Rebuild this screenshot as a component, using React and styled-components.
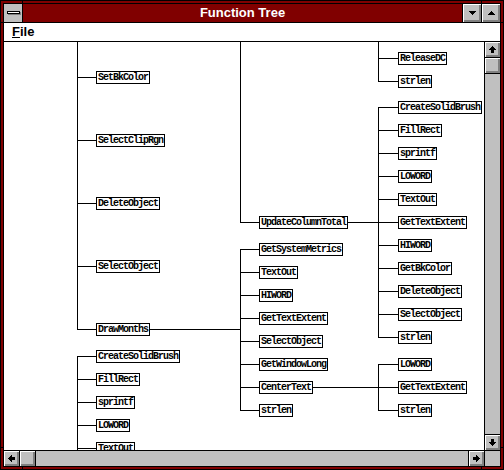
import React from 'react'
import styled, { createGlobalStyle } from 'styled-components'

// client area origin in page pixels
const OX = 4
const OY = 42
const BOTTOM = 450

const COLS = [
  { line: 77, box: 96 },
  { line: 240, box: 259 },
  { line: 378, box: 398 },
]

const groups = [
  { col: 0, open: 'top', items: [['SetBkColor', 77], ['SelectClipRgn', 140], ['DeleteObject', 203], ['SelectObject', 266], ['DrawMonths', 329]] },
  { col: 0, open: 'bottom', items: [['CreateSolidBrush', 356], ['FillRect', 379], ['sprintf', 402], ['LOWORD', 425], ['TextOut', 448]] },
  { col: 1, open: 'top', items: [['UpdateColumnTotal', 222]] },
  {
    col: 1, parent: [0, 329],
    items: [['GetSystemMetrics', 249], ['TextOut', 272], ['HIWORD', 295], ['GetTextExtent', 318], ['SelectObject', 341], ['GetWindowLong', 364], ['CenterText', 387], ['strlen', 410]],
  },
  { col: 2, open: 'top', items: [['ReleaseDC', 58], ['strlen', 81]] },
  {
    col: 2, parent: [1, 222],
    items: [['CreateSolidBrush', 107], ['FillRect', 130], ['sprintf', 153], ['LOWORD', 176], ['TextOut', 199], ['GetTextExtent', 222], ['HIWORD', 245], ['GetBkColor', 268], ['DeleteObject', 291], ['SelectObject', 314], ['strlen', 337]],
  },
  { col: 2, parent: [1, 387], items: [['LOWORD', 364], ['GetTextExtent', 387], ['strlen', 410]] },
]

const GlobalStyle = createGlobalStyle`
  html, body { margin: 0; padding: 0; background: #fff; }
  body { font-family: "Liberation Sans", Arial, sans-serif; }
`

const Window = styled.div`
  position: relative;
  width: 504px;
  height: 470px;
  box-sizing: border-box;
  background: #800000;
  border: 1px solid #000;
  padding: 2px;
  display: flex;
`

const Notch = styled.div`
  position: absolute;
  background: #000;
  ${p => (p.$v ? 'width: 1px; height: 4px;' : 'width: 4px; height: 1px;')}
`

const Frame = styled.div`
  flex: 1;
  min-width: 0;
  border: 1px solid #000;
  display: flex;
  flex-direction: column;
`

const TitleBar = styled.div`
  height: 18px;
  border-bottom: 1px solid #000;
  background: #800000;
  display: flex;
`

const SysBox = styled.div`
  width: 19px;
  box-sizing: border-box;
  border-right: 1px solid #000;
  background: #c0c0c0;
  display: flex;
  align-items: center;
  justify-content: center;
`

const SysBar = styled.div`
  width: 11px;
  height: 1px;
  background: #fff;
  border: 1px solid #000;
  box-shadow: 1px 1px 0 #808080;
  margin-top: -1px;
`

const Title = styled.div`
  flex: 1;
  text-align: center;
  color: #fff;
  font: bold 13px/18px "Liberation Sans", Arial, sans-serif;
`

const TitleBtn = styled.div`
  width: 19px;
  box-sizing: border-box;
  border-left: 1px solid #000;
  background: #c0c0c0;
  box-shadow: inset 1px 1px #fff, inset -1px -1px #808080, inset -2px -2px #808080;
  display: flex;
  align-items: center;
  justify-content: center;
`

const MenuBar = styled.div`
  height: 18px;
  border-bottom: 1px solid #000;
  background: #fff;
  padding-left: 8px;
  font: bold 13px/18px "Liberation Sans", Arial, sans-serif;
  color: #000;
`

const Body = styled.div`
  display: grid;
  grid-template-columns: 480px 16px;
  grid-template-rows: 408px 16px;
`

const Client = styled.div`
  position: relative;
  overflow: hidden;
  background: #fff;
`

const Wires = styled.svg`
  position: absolute;
  left: 0;
  top: 0;
`

const Node = styled.div.attrs(p => ({ style: { left: p.$x, top: p.$y } }))`
  position: absolute;
  height: 13px;
  box-sizing: border-box;
  border: 1px solid #000;
  background: #fff;
  padding: 0 1px;
  color: #000;
  font: bold 10px/11px "Liberation Mono", "Courier New", monospace;
  letter-spacing: -1px;
  white-space: nowrap;
`

const VScroll = styled.div`
  border-left: 1px solid #000;
  background: #c0c0c0;
  display: flex;
  flex-direction: column;
`

const HScroll = styled.div`
  border-top: 1px solid #000;
  background: #c0c0c0;
  display: flex;
`

const Corner = styled.div`
  border-top: 1px solid #000;
  border-left: 1px solid #000;
  background: #c0c0c0;
`

const Track = styled.div`
  flex: 1;
`

const Knob = styled.div`
  flex: none;
  width: ${p => (p.$h ? '16px' : 'auto')};
  height: ${p => (p.$h ? 'auto' : '16px')};
  box-sizing: border-box;
  background: #c0c0c0;
  box-shadow: inset 1px 1px #fff, inset -1px -1px #808080, inset -2px -2px #808080;
  ${p => p.$edge && `border-${p.$edge}: 1px solid #000;`}
  display: flex;
  align-items: center;
  justify-content: center;
`

const ROT = { up: 0, right: 90, down: 180, left: 270 }

const Arrow = ({ dir }) => (
  <svg width="7" height="7" viewBox="0 0 7 7" shapeRendering="crispEdges" style={{ transform: `rotate(${ROT[dir]}deg)` }}>
    <path d="M3 0h1v1h1v1h1v1h1v1h-2v3h-3v-3h-2v-1h1v-1h1v-1h1z" fill="#000" />
  </svg>
)

const Tri = ({ up }) => (
  <svg width="7" height="4" viewBox="0 0 7 4" shapeRendering="crispEdges" style={{ transform: up ? 'rotate(180deg)' : 'none' }}>
    <path d="M0 0h7v1h-1v1h-1v1h-1v1h-1v-1h-1v-1h-1v-1h-1z" fill="#000" />
  </svg>
)

function buildWires() {
  const rects = []
  groups.forEach((g, gi) => {
    const c = COLS[g.col]
    const ys = g.items.map(i => i[1])
    const top = g.open === 'top' ? OY - 2 : Math.min(...ys)
    const bot = g.open === 'bottom' ? BOTTOM + 2 : Math.max(...ys)
    rects.push({ k: `v${gi}`, x: c.line, y: top, w: 1, h: bot - top + 1 })
    ys.forEach((y, i) => rects.push({ k: `h${gi}-${i}`, x: c.line, y, w: c.box - c.line, h: 1 }))
    if (g.parent) {
      const [pc, py] = g.parent
      const from = COLS[pc].box
      rects.push({ k: `p${gi}`, x: from, y: py, w: c.line - from, h: 1 })
    }
  })
  return rects
}

const wires = buildWires()

const FunctionTree = () => (
  <Client>
    <Wires width="480" height="408" shapeRendering="crispEdges">
      {wires.map(r => (
        <rect key={r.k} x={r.x - OX} y={r.y - OY} width={r.w} height={r.h} fill="#000" />
      ))}
    </Wires>
    {groups.map((g, gi) =>
      g.items.map(([name, y]) => (
        <Node key={`${gi}-${name}-${y}`} $x={COLS[g.col].box - OX} $y={y - 6 - OY}>
          {name}
        </Node>
      ))
    )}
  </Client>
)

const App = () => (
  <>
    <GlobalStyle />
    <Window>
      <Notch $v style={{ left: 21, top: -1 }} />
      <Notch $v style={{ left: 480, top: -1 }} />
      <Notch $v style={{ left: 21, bottom: -1 }} />
      <Notch $v style={{ left: 480, bottom: -1 }} />
      <Notch style={{ left: -1, top: 21 }} />
      <Notch style={{ right: -1, top: 21 }} />
      <Notch style={{ left: -1, top: 446 }} />
      <Notch style={{ right: -1, top: 446 }} />
      <Frame>
        <TitleBar>
          <SysBox>
            <SysBar />
          </SysBox>
          <Title>Function Tree</Title>
          <TitleBtn>
            <Tri />
          </TitleBtn>
          <TitleBtn>
            <Tri up />
          </TitleBtn>
        </TitleBar>
        <MenuBar>
          <u>F</u>ile
        </MenuBar>
        <Body>
          <FunctionTree />
          <VScroll>
            <Knob $edge="bottom">
              <Arrow dir="up" />
            </Knob>
            <Knob $edge="bottom" />
            <Track />
            <Knob $edge="top">
              <Arrow dir="down" />
            </Knob>
          </VScroll>
          <HScroll>
            <Knob $h $edge="right">
              <Arrow dir="left" />
            </Knob>
            <Knob $h $edge="right" />
            <Track />
            <Knob $h $edge="left">
              <Arrow dir="right" />
            </Knob>
          </HScroll>
          <Corner />
        </Body>
      </Frame>
    </Window>
  </>
)

export default App
